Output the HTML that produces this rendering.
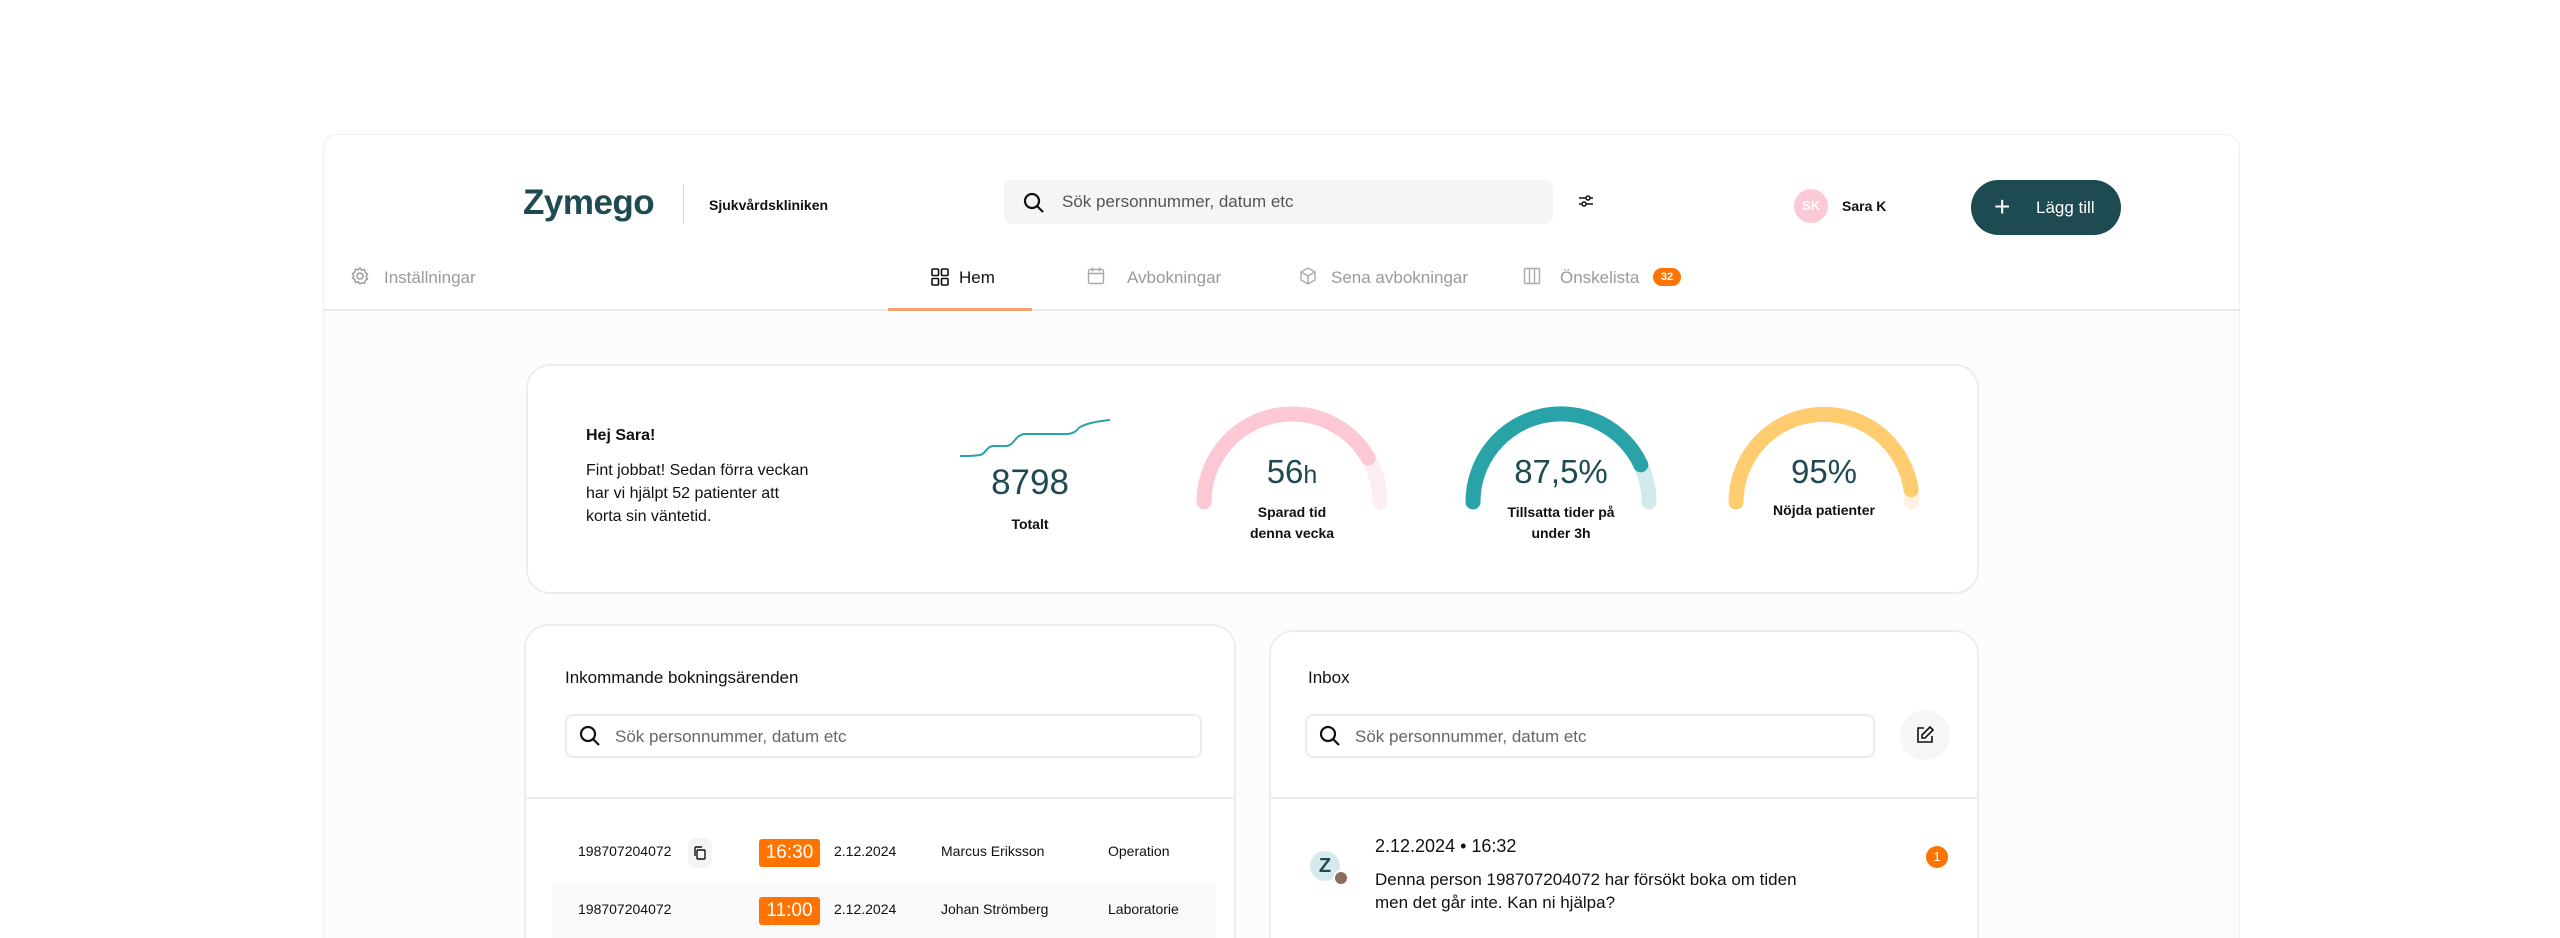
<!DOCTYPE html>
<html><head><meta charset="utf-8"><style>
*{margin:0;padding:0;box-sizing:border-box}
html,body{width:2560px;height:938px;overflow:hidden}
body{background:#fff;font-family:"Liberation Sans",sans-serif;color:#111;position:relative}
#w{position:relative;width:2560px;height:938px;overflow:hidden}
.a{position:absolute;white-space:nowrap}
.card{position:absolute;background:#fff;border:2px solid #eeecf0}
.nav{font-size:17px;color:#9a9a9a}
.sm{font-size:14px;color:#111}
.search{position:absolute;border-radius:8px}
.ph{font-size:17px;color:#666}
</style></head><body><div id="w">
<div class="a" style="left:323px;top:134px;width:1917px;height:820px;background:#fcfbfd;border:1px solid #f1eff3;border-radius:14px 14px 0 0"></div>
<div class="a" style="left:324px;top:135px;width:1915px;height:176px;background:#fff;border-radius:14px 14px 0 0;border-bottom:2px solid #ebe9ee"></div>
<div class="a" style="left:523px;top:183px;font-size:35px;font-weight:bold;color:#1e4a52;letter-spacing:-0.5px">Zymego</div>
<div class="a" style="left:683px;top:184px;width:1px;height:40px;background:#ddd"></div>
<div class="a" style="left:709px;top:197px;font-size:14px;font-weight:bold">Sjukvårdskliniken</div>
<div class="search" style="left:1004px;top:180px;width:549px;height:44px;background:#f6f4f7"></div>
<svg class="a" style="left:1022px;top:191px" width="24" height="24" viewBox="0 0 24 24" fill="none" stroke="#111" stroke-width="2.2"><circle cx="10" cy="10" r="7"/><path d="M15 15l6 6"/></svg>
<div class="a ph" style="left:1062px;top:192px;color:#555">Sök personnummer, datum etc</div>
<svg class="a" style="left:1577px;top:192px" width="18" height="18" viewBox="0 0 18 18" fill="none" stroke="#111" stroke-width="1.5"><path d="M2 6h14M2 12h14"/><circle cx="11" cy="6" r="2" fill="#fff"/><circle cx="7" cy="12" r="2" fill="#fff"/></svg>
<div class="a" style="left:1794px;top:189px;width:34px;height:34px;border-radius:50%;background:#fbcad6;color:#fff;font-size:13px;font-weight:bold;text-align:center;line-height:34px">SK</div>
<div class="a" style="left:1842px;top:198px;font-size:14px;font-weight:bold">Sara K</div>
<div class="a" style="left:1971px;top:180px;width:150px;height:55px;border-radius:28px;background:#1e4a52;color:#fff;font-size:17px;line-height:55px;padding-left:65px">Lägg till</div>
<div class="a" style="left:1994px;top:197px;color:#fff;font-size:28px;line-height:20px;font-weight:300">+</div>
<svg class="a" style="left:350px;top:266px" width="20" height="20" viewBox="0 0 20 20" fill="none" stroke="#999" stroke-width="1.4"><circle cx="10" cy="10" r="3"/><path d="M10 2l1.8 2.2 2.8-.6.6 2.8L17.5 8 16.2 10.5 17.5 13l-2.3 1.6-.6 2.8-2.8-.6L10 18l-1.8-2.2-2.8.6-.6-2.8L2.5 12l1.3-2L2.5 7.6 4.8 6 5.4 3.2l2.8.6z"/></svg>
<div class="a nav" style="left:384px;top:268px">Inställningar</div>
<svg class="a" style="left:930px;top:267px" width="20" height="20" viewBox="0 0 20 20" fill="none" stroke="#111" stroke-width="1.6"><rect x="2" y="2" width="6.5" height="6.5" rx="1"/><rect x="11.5" y="2" width="6.5" height="6.5" rx="1"/><rect x="2" y="11.5" width="6.5" height="6.5" rx="1"/><rect x="11.5" y="11.5" width="6.5" height="6.5" rx="1"/></svg>
<div class="a nav" style="left:959px;top:268px;color:#111">Hem</div>
<div class="a" style="left:888px;top:308px;width:144px;height:3px;background:#f7a26a"></div>
<svg class="a" style="left:1086px;top:266px" width="20" height="20" viewBox="0 0 20 20" fill="none" stroke="#aaa" stroke-width="1.4"><rect x="2.5" y="3.5" width="15" height="14" rx="1.5"/><path d="M2.5 7.5h15M6.5 1.5v4M13.5 1.5v4"/></svg>
<div class="a nav" style="left:1127px;top:268px">Avbokningar</div>
<svg class="a" style="left:1298px;top:266px" width="20" height="20" viewBox="0 0 20 20" fill="none" stroke="#aaa" stroke-width="1.4"><path d="M10 2l7 4v8l-7 4-7-4V6z M3 6l7 4 7-4M10 10v8"/></svg>
<div class="a nav" style="left:1331px;top:268px">Sena avbokningar</div>
<svg class="a" style="left:1522px;top:266px" width="20" height="20" viewBox="0 0 20 20" fill="none" stroke="#aaa" stroke-width="1.4"><rect x="2.5" y="2.5" width="15" height="15" rx="1"/><path d="M7.5 2.5v15M12.5 2.5v15"/></svg>
<div class="a nav" style="left:1560px;top:268px">Önskelista</div>
<div class="a" style="left:1653px;top:268px;width:28px;height:18px;border-radius:9px;background:#ff7300;color:#fff;font-size:11px;font-weight:bold;text-align:center;line-height:18px">32</div>
<div class="card" style="left:526px;top:364px;width:1453px;height:230px;border-radius:24px"></div>
<div class="a" style="left:586px;top:427px;font-size:16px;font-weight:bold">Hej Sara!</div>
<div class="a" style="left:586px;top:459px;font-size:16px;line-height:23px">Fint jobbat! Sedan förra veckan<br>har vi hjälpt 52 patienter att<br>korta sin väntetid.</div>
<svg class="a" style="left:958px;top:416px" width="156" height="44" viewBox="0 0 156 44" fill="none" stroke="#2aa3a8" stroke-width="2"><path d="M2 40 C14 40 14 40 22 39 C28 38 28 30 36 30 L48 30 C56 30 56 20 66 18 L108 18 C118 18 120 12 122 11 C126 9 132 6 152 4"/></svg>
<div class="a" style="left:930px;top:463px;width:200px;text-align:center;font-size:35px;color:#1e4a52">8798</div>
<div class="a" style="left:930px;top:516px;width:200px;text-align:center;font-size:14px;font-weight:bold">Totalt</div>
<svg class="a" style="left:1180px;top:395px" width="800" height="120" viewBox="1180 395 800 120" fill="none" stroke-width="15" stroke-linecap="round">
 <path d="M1204 502 A88 88 0 0 1 1380 502" stroke="#fdeef2"/>
 <path d="M1204 502 A88 88 0 0 1 1368.2 458" stroke="#fbc8d4"/>
 <path d="M1473 502 A88 88 0 0 1 1649 502" stroke="#d3eaec"/>
 <path d="M1473 502 A88 88 0 0 1 1640.8 464.8" stroke="#2aa3a8"/>
 <path d="M1736 502 A88 88 0 0 1 1912 502" stroke="#fdf2e0"/>
 <path d="M1736 502 A88 88 0 0 1 1911.1 489.8" stroke="#ffcc70"/>
</svg>
<div class="a" style="left:1192px;top:453px;width:200px;text-align:center;font-size:33px;color:#1e4a52">56<span style="font-size:25px">h</span></div>
<div class="a" style="left:1192px;top:502px;width:200px;text-align:center;font-size:14px;font-weight:bold;line-height:21px;white-space:normal">Sparad tid<br>denna vecka</div>
<div class="a" style="left:1461px;top:453px;width:200px;text-align:center;font-size:33px;color:#1e4a52">87,5%</div>
<div class="a" style="left:1461px;top:502px;width:200px;text-align:center;font-size:14px;font-weight:bold;line-height:21px;white-space:normal">Tillsatta tider på<br>under 3h</div>
<div class="a" style="left:1724px;top:453px;width:200px;text-align:center;font-size:33px;color:#1e4a52">95%</div>
<div class="a" style="left:1724px;top:502px;width:200px;text-align:center;font-size:14px;font-weight:bold">Nöjda patienter</div>
<div class="card" style="left:524px;top:624px;width:712px;height:340px;border-radius:24px"></div>
<div class="a" style="left:565px;top:668px;font-size:17px">Inkommande bokningsärenden</div>
<div class="search" style="left:565px;top:714px;width:637px;height:44px;border:2px solid #ecebee;background:#fff"></div>
<svg class="a" style="left:578px;top:724px" width="24" height="24" viewBox="0 0 24 24" fill="none" stroke="#111" stroke-width="2.2"><circle cx="10" cy="10" r="7"/><path d="M15 15l6 6"/></svg>
<div class="a ph" style="left:615px;top:727px">Sök personnummer, datum etc</div>
<div class="a" style="left:526px;top:797px;width:710px;height:2px;background:#eeecf0"></div>
<div class="a" style="left:552px;top:883px;width:663px;height:60px;background:#faf9fb"></div>
<div class="a sm" style="left:578px;top:843px">198707204072</div>
<div class="a" style="left:688px;top:838px;width:24px;height:30px;border-radius:8px;background:#f4f3f5"></div>
<svg class="a" style="left:692px;top:845px" width="16" height="16" viewBox="0 0 16 16" fill="none" stroke="#111" stroke-width="1.4"><rect x="5" y="5" width="8" height="9" rx="1"/><path d="M3 11V3a1 1 0 0 1 1-1h6"/></svg>
<div class="a" style="left:759px;top:839px;width:61px;height:28px;border-radius:3px;background:#ff7300;color:#fff;font-size:19px;text-align:center;line-height:28px">16:30</div>
<div class="a sm" style="left:834px;top:843px">2.12.2024</div>
<div class="a sm" style="left:941px;top:843px">Marcus Eriksson</div>
<div class="a sm" style="left:1108px;top:843px">Operation</div>
<div class="a sm" style="left:578px;top:901px">198707204072</div>
<div class="a" style="left:759px;top:897px;width:61px;height:28px;border-radius:3px;background:#ff7300;color:#fff;font-size:19px;text-align:center;line-height:28px">11:00</div>
<div class="a sm" style="left:834px;top:901px">2.12.2024</div>
<div class="a sm" style="left:941px;top:901px">Johan Strömberg</div>
<div class="a sm" style="left:1108px;top:901px">Laboratorie</div>
<div class="card" style="left:1269px;top:630px;width:710px;height:340px;border-radius:24px"></div>
<div class="a" style="left:1308px;top:668px;font-size:17px">Inbox</div>
<div class="search" style="left:1305px;top:714px;width:570px;height:44px;border:2px solid #ecebee;background:#fff"></div>
<svg class="a" style="left:1318px;top:724px" width="24" height="24" viewBox="0 0 24 24" fill="none" stroke="#111" stroke-width="2.2"><circle cx="10" cy="10" r="7"/><path d="M15 15l6 6"/></svg>
<div class="a ph" style="left:1355px;top:727px">Sök personnummer, datum etc</div>
<div class="a" style="left:1900px;top:710px;width:50px;height:50px;border-radius:50%;background:#f6f5f7"></div>
<svg class="a" style="left:1915px;top:725px" width="20" height="20" viewBox="0 0 20 20" fill="none" stroke="#111" stroke-width="1.6"><path d="M9 3H3v14h14v-6"/><path d="M15 2l3 3-8 8H7v-3z"/></svg>
<div class="a" style="left:1271px;top:797px;width:708px;height:2px;background:#eeecf0"></div>
<div class="a" style="left:1310px;top:851px;width:30px;height:30px;border-radius:50%;background:#d6eaee;color:#1e4a52;font-weight:bold;font-size:20px;text-align:center;line-height:30px">Z</div>
<div class="a" style="left:1333px;top:870px;width:16px;height:16px;border-radius:50%;background:#8a6d5c;border:2px solid #fff"></div>
<div class="a" style="left:1375px;top:836px;font-size:18px">2.12.2024 • 16:32</div>
<div class="a" style="left:1375px;top:868px;font-size:17px;line-height:23px">Denna person 198707204072 har försökt boka om tiden<br>men det går inte. Kan ni hjälpa?</div>
<div class="a" style="left:1926px;top:846px;width:22px;height:22px;border-radius:50%;background:#ff7300;color:#fff;font-size:13px;text-align:center;line-height:22px">1</div>
</div></body></html>
